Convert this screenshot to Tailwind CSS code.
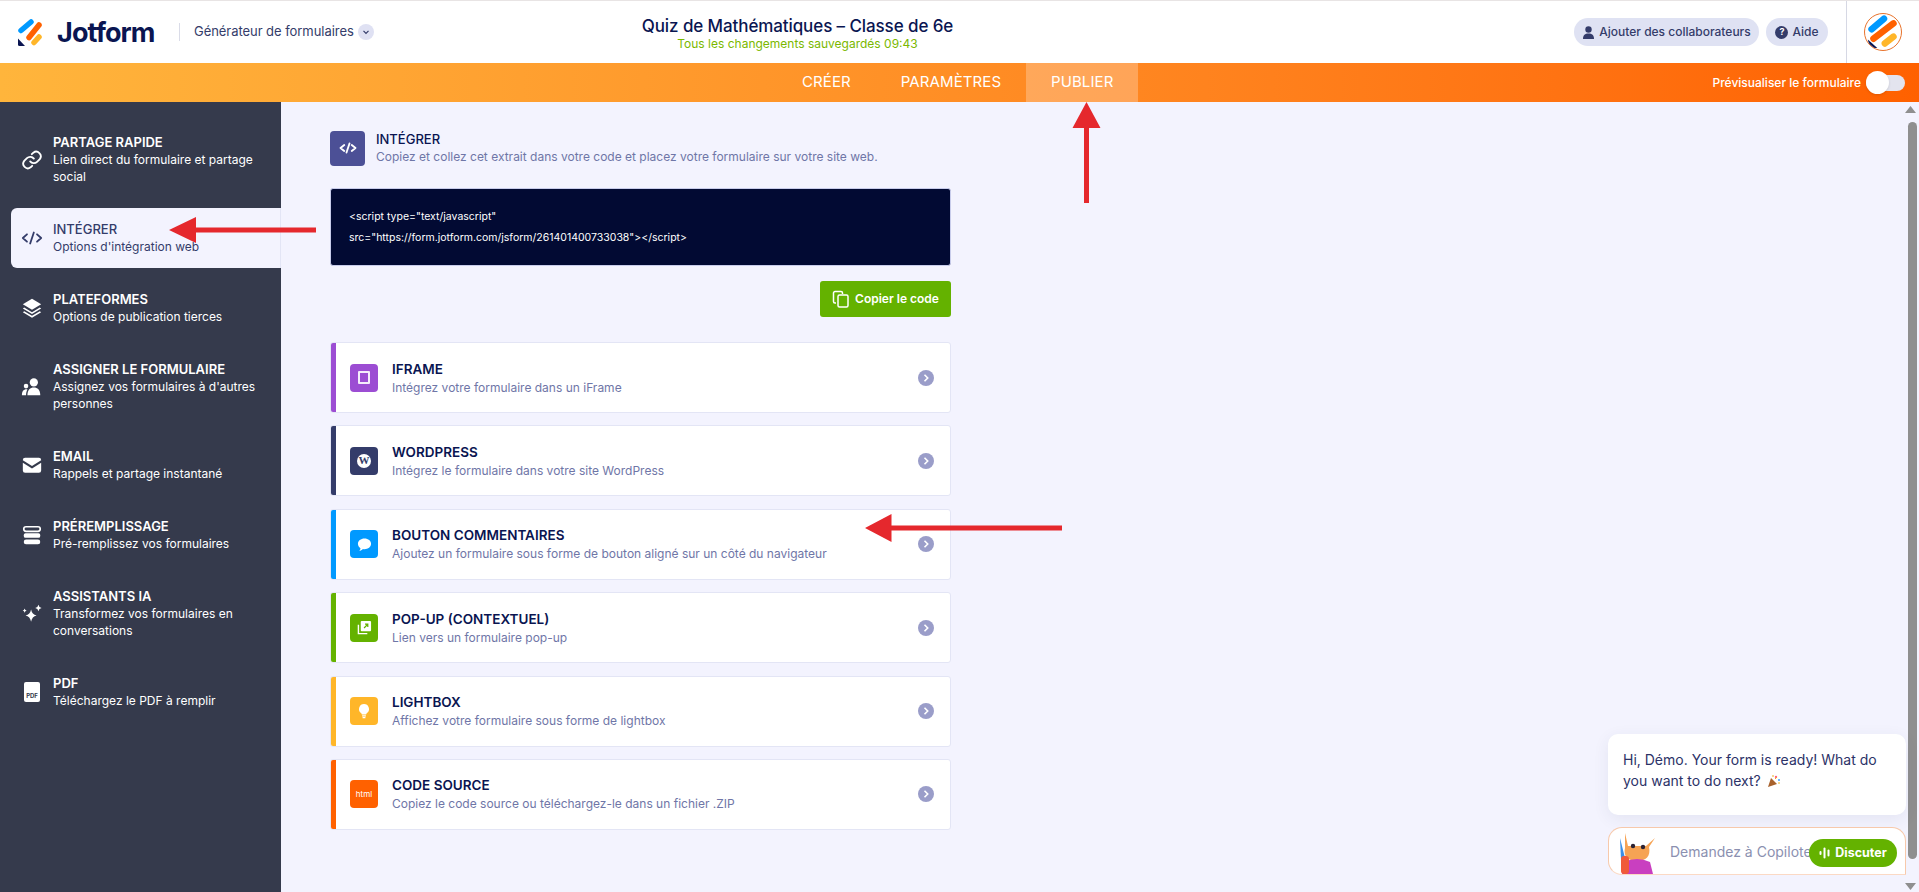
<!DOCTYPE html>
<html lang="fr">
<head>
<meta charset="utf-8">
<title>Jotform</title>
<script src="https://cdn.jsdelivr.net/npm/@tailwindcss/browser@4"></script>
</head>
<body class="relative h-[892px] w-[1919px] overflow-hidden bg-[#f3f3fe] font-['Inter',sans-serif] text-[#0a1551]">

<header class="flex h-[63px] items-center border-t border-[#e8e4e4] bg-white">
  <div class="flex w-[640px] items-center pl-[18px]">
    <svg class="h-[27px] w-[24px] shrink-0" viewBox="0 0 24 27">
      <line x1="3" y1="11.5" x2="13" y2="3" stroke="#0099ff" stroke-width="5.5" stroke-linecap="round"/>
      <line x1="11" y1="18.5" x2="21" y2="6" stroke="#ff6100" stroke-width="5.5" stroke-linecap="round"/>
      <line x1="16" y1="23.5" x2="21" y2="18" stroke="#ffb629" stroke-width="5.5" stroke-linecap="round"/>
      <path d="M0 19.5 L7 27 L1.5 27 Q0 27 0 25.5 Z" fill="#0a1551"/>
    </svg>
    <span class="ml-[15px] w-[108px] text-[27px] leading-none font-bold tracking-[-0.9px]">Jotform</span>
    <span class="mr-[14px] ml-[14px] h-[18px] w-px bg-[#dadce8]"></span>
    <span class="text-[13px] tracking-[-0.05px] text-[#343c6a]">Générateur de formulaires</span>
    <span class="ml-[4px] flex h-[16px] w-[16px] items-center justify-center rounded-full bg-[#dfe1f3]">
      <svg class="h-[8px] w-[8px]" viewBox="0 0 8 8" fill="none" stroke="#343c6a" stroke-width="1.2"><path d="M1.5 2.8 4 5.4 6.5 2.8"/></svg>
    </span>
  </div>
  <div class="flex w-[315px] flex-col items-center pt-[1px]">
    <span class="text-[17px] leading-[22px] font-medium tracking-[-0.1px] whitespace-nowrap">Quiz de Mathématiques – Classe de 6e</span>
    <span class="text-[12px] leading-[14px] text-[#7ab800] whitespace-nowrap">Tous les changements sauvegardés 09:43</span>
  </div>
  <div class="flex flex-1 items-center justify-end self-stretch">
    <div class="flex h-[28px] w-[185px] items-center justify-center gap-[4px] rounded-full bg-[#dfe2f3] text-[12px] font-medium text-[#343c6a]">
      <svg class="h-[13px] w-[13px]" viewBox="0 0 13 13" fill="#343c6a"><circle cx="6.5" cy="3.5" r="3.2"/><path d="M1 13c0-4 2-5.5 5.500-5.500S12 9 12 13z"/></svg>
      <span class="whitespace-nowrap">Ajouter des collaborateurs</span>
    </div>
    <div class="ml-[7px] flex h-[28px] w-[62px] items-center justify-center gap-[4px] rounded-full bg-[#dfe2f3] text-[12px] font-medium text-[#343c6a]">
      <span class="flex h-[13px] w-[13px] items-center justify-center rounded-full bg-[#343c6a] text-[9px] font-bold text-white">?</span>
      <span>Aide</span>
    </div>
    <span class="ml-[18px] w-px self-stretch bg-[#d6d8e4]"></span>
    <div class="ml-[17px] mr-[17px] h-[38px] w-[38px] overflow-hidden rounded-full border border-[#e8732c] bg-white">
      <svg class="h-full w-full" viewBox="0 0 38 38">
        <line x1="7" y1="16" x2="20" y2="5" stroke="#0099ff" stroke-width="7" stroke-linecap="round"/>
        <line x1="9" y1="26" x2="30" y2="10" stroke="#ff6100" stroke-width="7" stroke-linecap="round"/>
        <line x1="21" y1="31" x2="30" y2="24" stroke="#ffb629" stroke-width="7" stroke-linecap="round"/>
        <path d="M3 27 L13 36 L5 36 Z" fill="#0a1551"/>
      </svg>
    </div>
  </div>
</header>

<div class="flex h-[39px] items-stretch bg-gradient-to-r from-[#ffb53c] to-[#ff6100] text-white">
  <nav class="ml-[802px] flex items-stretch text-[15px] tracking-[0.1px]">
    <span class="flex items-center">CRÉER</span>
    <span class="ml-[50px] flex items-center">PARAMÈTRES</span>
    <span class="ml-[25px] flex w-[112px] items-center justify-center bg-white/25">PUBLIER</span>
  </nav>
  <div class="ml-auto flex items-center pr-[14px]">
    <span class="mr-[5px] text-[12px] font-medium whitespace-nowrap">Prévisualiser le formulaire</span>
    <span class="relative block h-[16px] w-[39px] rounded-full bg-[#e3e4ee]">
      <span class="absolute top-[-4px] left-0 h-[23px] w-[23px] rounded-full bg-white shadow"></span>
    </span>
  </div>
</div>

<div class="flex h-[790px]">
  <aside class="flex w-[281px] shrink-0 flex-col gap-[36px] bg-[#353a4c] pt-[32px] text-white">
    <div class="flex items-center pl-[21px]">
      <svg class="h-[22px] w-[22px] shrink-0" viewBox="0 0 24 24" fill="none" stroke="white" stroke-width="2" stroke-linecap="round"><path d="M10 13.500a5 5 0 0 0 7.500.5l3-3a5 5 0 0 0-7-7l-1.700 1.700"/><path d="M14 10.500a5 5 0 0 0-7.500-.5l-3 3a5 5 0 0 0 7 7l1.700-1.700"/></svg>
      <div class="ml-[10px]"><div class="text-[13px] leading-[17px] font-semibold whitespace-nowrap">PARTAGE RAPIDE</div><div class="text-[12px] leading-[17px] whitespace-nowrap">Lien direct du formulaire et partage<br>social</div></div>
    </div>
    <div class="-my-[13px] ml-[11px] flex items-center rounded-l-[6px] border-r border-[#e3e5f5] bg-[#f3f3fe] py-[13px] pl-[10px] text-[#343c6a]">
      <svg class="h-[22px] w-[22px] shrink-0" viewBox="0 0 24 24" fill="none" stroke="#343c6a" stroke-width="2" stroke-linecap="round" stroke-linejoin="round"><path d="M6.500 8 2 12l4.500 4M17.500 8 22 12l-4.500 4M14 6l-4 12"/></svg>
      <div class="ml-[10px]"><div class="text-[13px] leading-[17px] font-medium whitespace-nowrap">INTÉGRER</div><div class="text-[12px] leading-[17px] whitespace-nowrap">Options d'intégration web</div></div>
    </div>
    <div class="flex items-center pl-[21px]">
      <svg class="h-[22px] w-[22px] shrink-0" viewBox="0 0 24 24" fill="white"><path d="M12 2 22 8l-10 6L2 8z"/><path d="M3.500 11.500 2 12.500l10 6 10-6-1.500-1-8.500 5z"/><path d="M3.500 15.500 2 16.500l10 6 10-6-1.500-1-8.500 5z"/></svg>
      <div class="ml-[10px]"><div class="text-[13px] leading-[17px] font-semibold whitespace-nowrap">PLATEFORMES</div><div class="text-[12px] leading-[17px] whitespace-nowrap">Options de publication tierces</div></div>
    </div>
    <div class="flex items-center pl-[21px]">
      <svg class="h-[22px] w-[22px] shrink-0" viewBox="0 0 24 24" fill="white"><circle cx="14" cy="7" r="4.500"/><path d="M7 21c0-6 3-8.500 7-8.500s7 2.500 7 8.500z"/><circle cx="5.500" cy="11" r="2.500"/><path d="M1 21c0-4 1.500-6.500 5-6.500.6 0 .8.100 1 .2C6 16.500 5.500 18.500 5.500 21z"/></svg>
      <div class="ml-[10px]"><div class="text-[13px] leading-[17px] font-semibold whitespace-nowrap">ASSIGNER LE FORMULAIRE</div><div class="text-[12px] leading-[17px] whitespace-nowrap">Assignez vos formulaires à d'autres<br>personnes</div></div>
    </div>
    <div class="flex items-center pl-[21px]">
      <svg class="h-[22px] w-[22px] shrink-0" viewBox="0 0 24 24" fill="white"><path d="M2 6.500Q2 4 4.500 4h15Q22 4 22 6.500v.3l-10 6.200-10-6.200z"/><path d="M2 9.600l10 6.200 10-6.200V18q0 2.500-2.500 2.500h-15Q2 20.500 2 18z"/></svg>
      <div class="ml-[10px]"><div class="text-[13px] leading-[17px] font-semibold whitespace-nowrap">EMAIL</div><div class="text-[12px] leading-[17px] whitespace-nowrap">Rappels et partage instantané</div></div>
    </div>
    <div class="flex items-center pl-[21px]">
      <svg class="h-[22px] w-[22px] shrink-0" viewBox="0 0 24 24" fill="white"><rect x="3" y="3" width="18" height="5" rx="2.500" fill="none" stroke="white" stroke-width="1.800"/><rect x="3" y="10" width="18" height="5" rx="2"/><rect x="3" y="17" width="18" height="5" rx="2.500"/></svg>
      <div class="ml-[10px]"><div class="text-[13px] leading-[17px] font-semibold whitespace-nowrap">PRÉREMPLISSAGE</div><div class="text-[12px] leading-[17px] whitespace-nowrap">Pré-remplissez vos formulaires</div></div>
    </div>
    <div class="flex items-center pl-[21px]">
      <svg class="h-[22px] w-[22px] shrink-0" viewBox="0 0 24 24" fill="white"><path d="M11 7q1 5.500 6 6.500-5 1-6 7-1-6-6-7 5-1 6-6.500z"/><path d="M19 2q.5 3 3.500 3.500-3 .5-3.500 3.500-.5-3-3.500-3.500 3-.5 3.500-3.500z"/><path d="M4 6q.4 2 2.200 2.200-1.800.4-2.200 2.300-.4-1.900-2.200-2.300Q3.600 8 4 6z"/></svg>
      <div class="ml-[10px]"><div class="text-[13px] leading-[17px] font-semibold whitespace-nowrap">ASSISTANTS IA</div><div class="text-[12px] leading-[17px] whitespace-nowrap">Transformez vos formulaires en<br>conversations</div></div>
    </div>
    <div class="flex items-center pl-[21px]">
      <div class="relative flex h-[22px] w-[22px] shrink-0 items-center justify-center">
        <div class="flex h-[20px] w-[16px] items-end justify-center rounded-[2px] bg-white pb-[3px] text-[6px] leading-none font-bold text-[#353a4c]">PDF</div>
      </div>
      <div class="ml-[10px]"><div class="text-[13px] leading-[17px] font-semibold whitespace-nowrap">PDF</div><div class="text-[12px] leading-[17px] whitespace-nowrap">Téléchargez le PDF à remplir</div></div>
    </div>
  </aside>

  <main class="ml-[49px] w-[621px] pt-[28px]">
    <div class="flex items-center">
      <div class="flex h-[35px] w-[35px] items-center justify-center rounded-[4px] bg-[#4c5096]">
        <svg class="h-[18px] w-[18px]" viewBox="0 0 24 24" fill="none" stroke="white" stroke-width="2.500" stroke-linecap="round" stroke-linejoin="round"><path d="M7 8l-5 4 5 4M17 8l5 4-5 4M14 6l-4 12"/></svg>
      </div>
      <div class="ml-[11px]">
        <div class="text-[13px] leading-[18px] font-medium">INTÉGRER</div>
        <div class="text-[12px] leading-[18px] text-[#6f76a7] whitespace-nowrap">Copiez et collez cet extrait dans votre code et placez votre formulaire sur votre site web.</div>
      </div>
    </div>
    <div class="mt-[22px] flex h-[78px] flex-col justify-center gap-[7px] rounded-[3px] border border-[#c8cceb] bg-[#020a33] pl-[18px] text-[10.5px] leading-[14px] text-white">
      <div>&lt;script type="text/javascript"</div>
      <div>src="https://form.jotform.com/jsform/261401400733038"&gt;&lt;/script&gt;</div>
    </div>
    <div class="mt-[15px] flex justify-end">
      <div class="flex h-[36px] w-[131px] items-center justify-center gap-[5px] rounded-[3px] bg-[#64b200] text-[12px] font-semibold text-white">
        <svg class="h-[18px] w-[18px]" viewBox="0 0 18 18" fill="none" stroke="white" stroke-width="1.500"><path d="M4 13H3a1.500 1.500 0 0 1-1.500-1.500V3A1.500 1.500 0 0 1 3 1.500h6A1.500 1.500 0 0 1 10.500 3v1"/><rect x="6" y="5" width="10" height="12" rx="1.500"/></svg>
        <span class="whitespace-nowrap">Copier le code</span>
      </div>
    </div>
    <div class="mt-[25px] flex flex-col gap-[12.4px]">
      <div class="flex h-[71px] items-center overflow-hidden rounded-[3px] border border-[#e3e5f5] bg-white">
        <span class="w-[5px] self-stretch bg-[#9c4dd3]"></span>
        <div class="ml-[14px] flex h-[28px] w-[28px] items-center justify-center rounded-[4px] bg-[#9c4dd3]">
          <div class="h-[13px] w-[12px] rounded-[1px] border-[2px] border-white/90"></div>
        </div>
        <div class="ml-[14px] flex-1"><div class="text-[13.500px] leading-[20px] font-semibold">IFRAME</div><div class="text-[12px] leading-[18px] text-[#6f76a7]">Intégrez votre formulaire dans un iFrame</div></div>
        <svg class="mr-[16px] h-[16px] w-[16px]" viewBox="0 0 16 16"><circle cx="8" cy="8" r="8" fill="#9a9dc9"/><path d="M6.500 4.800 9.700 8l-3.200 3.200" fill="none" stroke="white" stroke-width="1.600"/></svg>
      </div>
      <div class="flex h-[71px] items-center overflow-hidden rounded-[3px] border border-[#e3e5f5] bg-white">
        <span class="w-[5px] self-stretch bg-[#343c6a]"></span>
        <div class="ml-[14px] flex h-[28px] w-[28px] items-center justify-center rounded-[4px] bg-[#343c6a]">
          <div class="flex h-[14px] w-[14px] items-center justify-center rounded-full bg-white font-['Liberation_Serif',serif] text-[11px] leading-none font-bold text-[#343c6a]">W</div>
        </div>
        <div class="ml-[14px] flex-1"><div class="text-[13.500px] leading-[20px] font-semibold">WORDPRESS</div><div class="text-[12px] leading-[18px] text-[#6f76a7]">Intégrez le formulaire dans votre site WordPress</div></div>
        <svg class="mr-[16px] h-[16px] w-[16px]" viewBox="0 0 16 16"><circle cx="8" cy="8" r="8" fill="#9a9dc9"/><path d="M6.500 4.800 9.700 8l-3.200 3.200" fill="none" stroke="white" stroke-width="1.600"/></svg>
      </div>
      <div class="flex h-[71px] items-center overflow-hidden rounded-[3px] border border-[#e3e5f5] bg-white">
        <span class="w-[5px] self-stretch bg-[#0099ff]"></span>
        <div class="ml-[14px] flex h-[28px] w-[28px] items-center justify-center rounded-[4px] bg-[#0099ff]">
          <svg class="h-[15px] w-[15px]" viewBox="0 0 16 16" fill="white"><path d="M8 1.500c3.900 0 7 2.500 7 5.800s-3.100 5.800-7 5.800c-.6 0-1.200 0-1.700-.2C5.200 14 3.800 14.800 2.500 15c.7-.8 1.100-1.800 1.200-3C2 11 1 9.300 1 7.300 1 4 4.100 1.500 8 1.500z"/></svg>
        </div>
        <div class="ml-[14px] flex-1"><div class="text-[13.500px] leading-[20px] font-semibold">BOUTON COMMENTAIRES</div><div class="text-[12px] leading-[18px] text-[#6f76a7]">Ajoutez un formulaire sous forme de bouton aligné sur un côté du navigateur</div></div>
        <svg class="mr-[16px] h-[16px] w-[16px]" viewBox="0 0 16 16"><circle cx="8" cy="8" r="8" fill="#9a9dc9"/><path d="M6.500 4.800 9.700 8l-3.200 3.200" fill="none" stroke="white" stroke-width="1.600"/></svg>
      </div>
      <div class="flex h-[71px] items-center overflow-hidden rounded-[3px] border border-[#e3e5f5] bg-white">
        <span class="w-[5px] self-stretch bg-[#64b200]"></span>
        <div class="ml-[14px] flex h-[28px] w-[28px] items-center justify-center rounded-[4px] bg-[#64b200]">
          <svg class="h-[15px] w-[15px]" viewBox="0 0 16 16"><path d="M1.500 5v9.500H11" fill="none" stroke="white" stroke-width="1.500"/><rect x="4" y="1" width="11" height="11" rx="1" fill="white"/><path d="M7.500 8.500 11.500 4.500M8.500 4.500h3v3" fill="none" stroke="#64b200" stroke-width="1.300"/></svg>
        </div>
        <div class="ml-[14px] flex-1"><div class="text-[13.500px] leading-[20px] font-semibold">POP-UP (CONTEXTUEL)</div><div class="text-[12px] leading-[18px] text-[#6f76a7]">Lien vers un formulaire pop-up</div></div>
        <svg class="mr-[16px] h-[16px] w-[16px]" viewBox="0 0 16 16"><circle cx="8" cy="8" r="8" fill="#9a9dc9"/><path d="M6.500 4.800 9.700 8l-3.200 3.200" fill="none" stroke="white" stroke-width="1.600"/></svg>
      </div>
      <div class="flex h-[71px] items-center overflow-hidden rounded-[3px] border border-[#e3e5f5] bg-white">
        <span class="w-[5px] self-stretch bg-[#ffb629]"></span>
        <div class="ml-[14px] flex h-[28px] w-[28px] items-center justify-center rounded-[4px] bg-[#ffb629]">
          <svg class="h-[16px] w-[16px]" viewBox="0 0 16 16" fill="white"><path d="M8 1a5 5 0 0 1 3 9c-.5.4-.8 1-.8 1.500H5.800c0-.5-.3-1.100-.8-1.500A5 5 0 0 1 8 1z"/><rect x="6" y="12.300" width="4" height="1.200" rx=".5"/><rect x="6.500" y="14" width="3" height="1.200" rx=".5"/></svg>
        </div>
        <div class="ml-[14px] flex-1"><div class="text-[13.500px] leading-[20px] font-semibold">LIGHTBOX</div><div class="text-[12px] leading-[18px] text-[#6f76a7]">Affichez votre formulaire sous forme de lightbox</div></div>
        <svg class="mr-[16px] h-[16px] w-[16px]" viewBox="0 0 16 16"><circle cx="8" cy="8" r="8" fill="#9a9dc9"/><path d="M6.500 4.800 9.700 8l-3.200 3.200" fill="none" stroke="white" stroke-width="1.600"/></svg>
      </div>
      <div class="flex h-[71px] items-center overflow-hidden rounded-[3px] border border-[#e3e5f5] bg-white">
        <span class="w-[5px] self-stretch bg-[#ff6100]"></span>
        <div class="ml-[14px] flex h-[28px] w-[28px] items-center justify-center rounded-[4px] bg-[#ff6100] text-[8px] text-white">html</div>
        <div class="ml-[14px] flex-1"><div class="text-[13.500px] leading-[20px] font-semibold">CODE SOURCE</div><div class="text-[12px] leading-[18px] text-[#6f76a7]">Copiez le code source ou téléchargez-le dans un fichier .ZIP</div></div>
        <svg class="mr-[16px] h-[16px] w-[16px]" viewBox="0 0 16 16"><circle cx="8" cy="8" r="8" fill="#9a9dc9"/><path d="M6.500 4.800 9.700 8l-3.200 3.200" fill="none" stroke="white" stroke-width="1.600"/></svg>
      </div>
    </div>
  </main>
</div>

<!-- red annotation arrows over the page -->
<svg class="pointer-events-none absolute top-0 left-0 h-[892px] w-[1919px]" viewBox="0 0 1919 892" fill="#e5282d">
  <path d="M169 230 196 217V227.500H316V232.500H196V243Z"/>
  <path d="M1086.500 102 1100.500 128H1089V203H1084V128H1072.500Z"/>
  <path d="M865 528 891.500 514V525.500H1062V530.500H891.500V542Z"/>
</svg>

<!-- scrollbar -->
<div class="absolute top-[102px] right-0 bottom-0 w-[16px]">
  <svg class="absolute top-[4px] left-[2px] h-[7px] w-[11px]" viewBox="0 0 11 7"><path d="M5.500 0 11 7H0z" fill="#8f8f8f"/></svg>
  <div class="absolute top-[20px] left-[5px] h-[737px] w-[9px] rounded-full bg-[#8f8f8f]"></div>
  <svg class="absolute bottom-[2px] left-[2px] h-[7px] w-[11px]" viewBox="0 0 11 7"><path d="M5.500 7 11 0H0z" fill="#8f8f8f"/></svg>
</div>

<!-- copilot widget -->
<div class="absolute top-[734px] left-[1608px] w-[298px]">
  <div class="h-[81px] rounded-[10px] bg-white px-[15px] pt-[15px] text-[14px] leading-[21px] text-[#2c3267] shadow-[0_4px_16px_rgba(52,60,106,0.08)]">
    Hi, Démo. Your form is ready! What do you want to do next?
    <svg class="ml-[2px] inline-block h-[14px] w-[14px] align-[-2px]" viewBox="0 0 14 14"><path d="M1 13 4 4l6 6z" fill="#a8622d"/><circle cx="9" cy="3" r="1.200" fill="#ff5a8a"/><circle cx="12" cy="6" r="1" fill="#3aa0ff"/><path d="M6 1v2M11 9h2M8 5l2-2" stroke="#f0b020" stroke-width="1"/></svg>
  </div>
  <div class="relative mt-[12px] flex h-[48px] items-center rounded-t-[14px] rounded-bl-[14px] border border-b-[#fbd9c4] border-[#f7c9ab] bg-white">
    <svg class="absolute bottom-0 left-[7px] h-[48px] w-[42px]" viewBox="0 0 42 48">
      <path d="M4 12l5 20-4 2z" fill="#3a8ee6"/>
      <path d="M9 7 12 20H30L39 12 33 21C35 30 30 35 21 35S7 30 9 22z" fill="#f6a354"/>
      <circle cx="17" cy="20" r="2.200" fill="#2b2233"/><circle cx="27" cy="21" r="2.200" fill="#2b2233"/>
      <path d="M8 36q13-6 26 0l3 12H6z" fill="#c93fc0"/>
      <rect x="5" y="30" width="8" height="18" rx="3" fill="#f05a3a"/>
    </svg>
    <span class="ml-[61px] text-[14px] text-[#8b90b0] whitespace-nowrap">Demandez à Copilote</span>
    <div class="absolute top-[11px] left-[200px] flex h-[28px] w-[88px] items-center justify-center gap-[4px] rounded-full bg-[#64b200] text-[12.500px] font-bold text-white">
      <svg class="h-[12px] w-[12px]" viewBox="0 0 12 12" fill="white"><rect x="0.500" y="4" width="2" height="4" rx="1"/><rect x="4.500" y="0.500" width="2" height="11" rx="1"/><rect x="8.500" y="2.500" width="2" height="7" rx="1"/></svg>
      <span>Discuter</span>
    </div>
  </div>
</div>

</body>
</html>
